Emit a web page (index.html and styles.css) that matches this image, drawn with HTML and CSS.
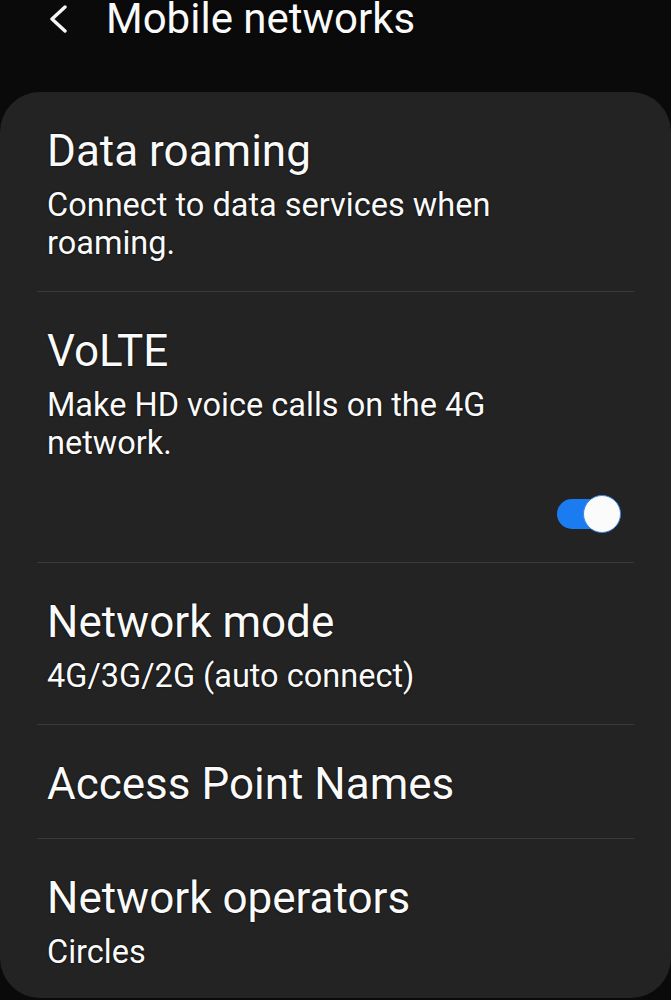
FILE: index.html
```html
<!DOCTYPE html>
<html lang="en">
<head>
    <meta charset="UTF-8">
    <meta name="viewport" content="width=device-width, initial-scale=1.0">
    <title>Mobile networks</title>
    <link rel="stylesheet" href="styles.css">
</head>
<body>
    <div class="top-bar">
        <svg class="back-icon" viewBox="0 0 22 28" width="22" height="28">
            <path d="M18 2 L5 14 L18 26" fill="none" stroke="#f5f5f5" stroke-width="3.4" stroke-linecap="round" stroke-linejoin="round"/>
        </svg>
        <h1 class="page-title">Mobile networks</h1>
    </div>

    <div class="card">
        <div class="item">
            <div class="item-title">Data roaming</div>
            <div class="item-sub">Connect to data services when<br>roaming.</div>
        </div>
        <div class="item">
            <div class="item-title">VoLTE</div>
            <div class="item-sub">Make HD voice calls on the 4G<br>network.</div>
            <div class="toggle-row">
                <div class="toggle">
                    <div class="toggle-knob"></div>
                </div>
            </div>
        </div>
        <div class="item">
            <div class="item-title">Network mode</div>
            <div class="item-sub">4G/3G/2G (auto connect)</div>
        </div>
        <div class="item">
            <div class="item-title">Access Point Names</div>
        </div>
        <div class="item last">
            <div class="item-title">Network operators</div>
            <div class="item-sub">Circles</div>
        </div>
    </div>
</body>
</html>
```

FILE: styles.css
```css
body {
    margin: 0;
    padding: 0;
    background: #0a0a0a;
    color: #fafafa;
    font-family: Roboto, 'Noto Sans', sans-serif;
    width: 671px;
    height: 1000px;
    overflow: hidden;
}
.top-bar {
    display: flex;
    align-items: flex-start;
    height: 92px;
    padding-left: 47px;
    box-sizing: border-box;
}
.back-icon {
    margin-top: 5px;
    margin-right: 37px;
}
.page-title {
    margin: 0;
    font-size: 42px;
    font-weight: 400;
    line-height: 42px;
    margin-top: -2px;
    text-shadow: 0 0 2px #000;
}
.card {
    background: #232323;
    border-radius: 40px;
    height: 906px;
    box-sizing: border-box;
    padding: 0 37px;
}
.item {
    padding: 34px 13px 29px 10px;
    border-bottom: 1px solid #3a3a3a;
}
.item.last {
    border-bottom: none;
}
.item-title {
    font-size: 44px;
    line-height: 50px;
    text-shadow: 0 0 2px #000;
}
.item-sub {
    font-size: 32.5px;
    line-height: 38px;
    margin-top: 10px;
    text-shadow: 0 0 2px #000;
}
.toggle-row {
    display: flex;
    justify-content: flex-end;
    margin-top: 33px;
}
.toggle {
    position: relative;
    width: 66px;
    height: 38px;
}
.toggle::before {
    content: "";
    position: absolute;
    left: 2px;
    top: 4px;
    width: 56px;
    height: 30px;
    border-radius: 15px;
    background: #1b7cf1;
}
.toggle-knob {
    position: absolute;
    right: 0;
    top: 0;
    width: 36px;
    height: 36px;
    border-radius: 50%;
    background: #fbfbfb;
    border: 1px solid #3b86e8;
}
```
